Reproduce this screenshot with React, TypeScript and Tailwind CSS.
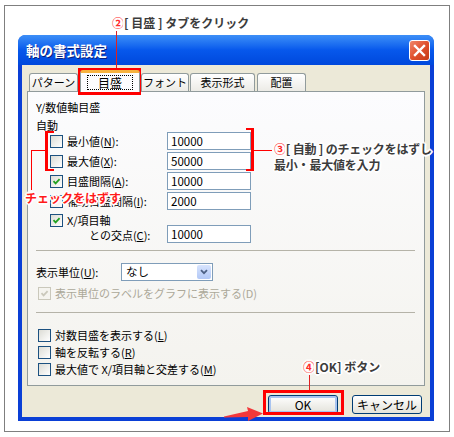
import clsx from "clsx";

function Check({ checked, disabled }: { checked?: boolean; disabled?: boolean }) {
  return (
    <span
      className={clsx(
        "flex h-[13px] w-[13px] shrink-0 items-center justify-center border",
        disabled
          ? "border-[#cac8bb] bg-[#f5f4ef]"
          : "border-[#1c5180] bg-gradient-to-br from-[#dcdcd5] to-white"
      )}
    >
      {checked && (
        <svg width="9" height="9" viewBox="0 0 9 9">
          <path
            d="M1.5 4.2 L3.6 6.4 L7.6 2.2"
            fill="none"
            stroke={disabled ? "#cac8bb" : "#21a121"}
            strokeWidth="1.8"
          />
        </svg>
      )}
    </span>
  );
}

function Field({ value }: { value: string }) {
  return (
    <div className="h-[18px] w-[84px] border border-[#7f9db9] bg-white pl-[3px] text-[11.5px] leading-[16px]">
      {value}
    </div>
  );
}

function Tab({ label, w, selected, ml }: { label: string; w: string; selected?: boolean; ml: string }) {
  return (
    <div
      className={clsx(
        "flex items-center justify-center whitespace-nowrap rounded-t-[3px] border border-b-0 border-[#919b9c] text-[11px]",
        w,
        ml,
        selected
          ? "relative z-10 mb-[-1px] h-[22px] border-t-[3px] border-t-[#f7b340] bg-[#fcfcfe] text-[12px]"
          : "h-[18px] bg-gradient-to-b from-white to-[#ecebe6]"
      )}
    >
      {selected ? (
        <span className="flex h-[15px] w-[46px] items-center justify-center border border-dotted border-black">{label}</span>
      ) : (
        label
      )}
    </div>
  );
}

const halo =
  "[text-shadow:-1px_-1px_0_#fff,1px_-1px_0_#fff,-1px_1px_0_#fff,1px_1px_0_#fff,0_-2px_0_#fff,0_2px_0_#fff,-2px_0_0_#fff,2px_0_0_#fff,0_0_3px_#fff]";

export default function App() {
  return (
    <div className="relative h-[437px] w-[454px] overflow-hidden bg-white pl-[4px] pt-[5px] font-['Noto_Sans_CJK_JP',sans-serif] text-black">
      <div className="h-[427px] w-[446px] border border-[#7f7f7f]">
        {/* dialog window */}
        <div className="ml-[13px] mt-[29px] flex h-[386px] w-[416px] flex-col rounded-t-[8px] bg-[#0a3fd6]">
          <div className="flex h-[30px] items-center justify-between rounded-t-[7px] bg-gradient-to-b from-[#3d8ff7] via-[#0758ec] to-[#0048dc] pl-[8px] pr-[4px]">
            <span className="text-[13.5px] font-bold text-white [text-shadow:1px_1px_0_#0a1e7c]">軸の書式設定</span>
            <div className="flex h-[21px] w-[21px] items-center justify-center rounded-[3px] border border-white bg-gradient-to-br from-[#f0866a] via-[#e0502c] to-[#c63a14]">
              <svg width="13" height="13" viewBox="0 0 13 13">
                <path d="M2 2 L11 11 M11 2 L2 11" stroke="#fff" strokeWidth="2.4" strokeLinecap="square" />
              </svg>
            </div>
          </div>
          <div className="mx-[4px] mb-[4px] flex flex-1 flex-col bg-[#ece9d8] px-[5px] pt-[5px]">
            {/* tabs */}
            <div className="flex h-[21px] items-end">
              <Tab label="パターン" w="w-[49px]" ml="ml-[2px]" />
              <Tab label="目盛" w="w-[60px]" ml="ml-[2px]" selected />
              <Tab label="フォント" w="w-[48px]" ml="ml-[1px]" />
              <Tab label="表示形式" w="w-[65px]" ml="ml-[1px]" />
              <Tab label="配置" w="w-[49px]" ml="ml-[2px]" />
            </div>
            {/* tab page */}
            <div className="flex h-[295px] flex-col border border-[#919b9c] bg-gradient-to-b from-[#fcfcfe] to-[#f4f3ee] pl-[8px] text-[11px]">
              <div className="mt-[8px] h-[14px] leading-[14px]">Y/数値軸目盛</div>
              <div className="mt-[5px] h-[13px] leading-[13px]">自動</div>
              <div className="flex flex-col gap-[2px]">
                <div className="flex h-[18px] items-center">
                  <div className="flex w-[131px] items-center pl-[14px]">
                    <Check />
                    <span className="ml-[4px]">最小値(<span className="underline">N</span>):</span>
                  </div>
                  <Field value="10000" />
                </div>
                <div className="flex h-[18px] items-center">
                  <div className="flex w-[131px] items-center pl-[14px]">
                    <Check />
                    <span className="ml-[4px]">最大値(<span className="underline">X</span>):</span>
                  </div>
                  <Field value="50000" />
                </div>
                <div className="flex h-[18px] items-center">
                  <div className="flex w-[131px] items-center pl-[14px]">
                    <Check checked />
                    <span className="ml-[4px]">目盛間隔(<span className="underline">A</span>):</span>
                  </div>
                  <Field value="10000" />
                </div>
                <div className="flex h-[18px] items-center">
                  <div className="flex w-[131px] items-center pl-[14px]">
                    <Check checked />
                    <span className="ml-[4px]">補助目盛間隔(<span className="underline">I</span>):</span>
                  </div>
                  <Field value="2000" />
                </div>
              </div>
              <div className="mt-[3px] flex h-[30px] items-end">
                <div className="flex w-[131px] flex-col">
                  <div className="flex h-[15px] items-center pl-[14px]">
                    <Check checked />
                    <span className="ml-[4px]">X/項目軸</span>
                  </div>
                  <div className="flex h-[15px] items-center pl-[53px]">
                    との交点(<span className="underline">C</span>):
                  </div>
                </div>
                <Field value="10000" />
              </div>
              <div className="mr-[9px] mt-[7px] h-[2px] border-t border-[#b5b3a8]" />
              <div className="mt-[11px] flex h-[18px] items-center">
                <span className="w-[85px]">表示単位(<span className="underline">U</span>):</span>
                <div className="flex h-[18px] w-[92px] items-center justify-between border border-[#7f9db9] bg-white pl-[4px] pr-[1px]">
                  <span className="text-[11.5px]">なし</span>
                  <div className="flex h-[14px] w-[14px] items-center justify-center rounded-[2px] bg-gradient-to-b from-[#d8e4fd] to-[#b2c8f6]">
                    <svg width="8" height="6" viewBox="0 0 8 6">
                      <path d="M1 1.2 L4 4.2 L7 1.2" fill="none" stroke="#4d6185" strokeWidth="1.8" />
                    </svg>
                  </div>
                </div>
              </div>
              <div className="mt-[5px] flex h-[14px] items-center pl-[2px] text-[#aca899]">
                <Check checked disabled />
                <span className="ml-[4px]">表示単位のラベルをグラフに表示する(D)</span>
              </div>
              <div className="mr-[9px] mt-[12px] h-[2px] border-t border-[#b5b3a8]" />
              <div className="mt-[13px] flex flex-col pl-[2px]">
                <div className="flex h-[17px] items-center">
                  <Check />
                  <span className="ml-[4px]">対数目盛を表示する(<span className="underline">L</span>)</span>
                </div>
                <div className="flex h-[17px] items-center">
                  <Check />
                  <span className="ml-[4px]">軸を反転する(<span className="underline">R</span>)</span>
                </div>
                <div className="flex h-[17px] items-center">
                  <Check />
                  <span className="ml-[4px]">最大値で X/項目軸と交差する(<span className="underline">M</span>)</span>
                </div>
              </div>
            </div>
            {/* buttons */}
            <div className="mt-[9px] flex justify-end gap-[14px] pr-[3px] text-[12px]">
              <div className="flex h-[19px] w-[70px] items-center justify-center rounded-[3px] border border-[#003c74] bg-gradient-to-b from-white to-[#e3e2da] shadow-[inset_0_0_0_2px_#a9c4f0]">
                OK
              </div>
              <div className="flex h-[19px] w-[70px] items-center justify-center rounded-[3px] border border-[#003c74] bg-gradient-to-b from-white to-[#e3e2da]">
                キャンセル
              </div>
            </div>
          </div>
        </div>
      </div>

      {/* annotation: step 2 */}
      <div className={clsx("absolute left-[112px] top-[15px] whitespace-nowrap text-[12px] font-bold leading-[16px] text-[#3c3c3c]", halo)}>
        <span className="text-[#ff2a2a]">②</span>[ 目盛 ] タブをクリック
      </div>
      <div className="absolute left-[116px] top-[31px] h-[37px] w-px bg-[#e02020]" />
      <div className="absolute left-[78px] top-[68px] h-[27px] w-[63px] border-[3px] border-[#ff0000]" />

      {/* annotation: uncheck */}
      <div className="absolute left-[45px] top-[131px] h-[40px] w-[9px] border-y-2 border-l-[3px] border-[#ff0000]" />
      <div className="absolute left-[31px] top-[150px] h-px w-[14px] bg-[#ff0000]" />
      <div className="absolute left-[31px] top-[150px] h-[40px] w-px bg-[#ff0000]" />
      <div className={clsx("absolute left-[25px] top-[189px] whitespace-nowrap text-[12px] font-bold leading-[18px] text-[#ff1a1a]", halo)}>
        チェックをはずす
      </div>

      {/* annotation: step 3 */}
      <div className="absolute left-[246px] top-[128px] h-[43px] w-[8px] border-y-2 border-r-[3px] border-[#ff0000]" />
      <div className="absolute left-[254px] top-[150px] h-px w-[18px] bg-[#ff0000]" />
      <div className={clsx("absolute left-[274px] top-[141px] flex flex-col gap-[1px] whitespace-nowrap text-[12px] font-bold leading-[15px] tracking-[-0.2px] text-[#3c3c3c]", halo)}>
        <div>
          <span className="text-[#ff2a2a]">③</span>[ 自動 ] のチェックをはずし
        </div>
        <div>最小・最大値を入力</div>
      </div>

      {/* annotation: step 4 */}
      <div className={clsx("absolute left-[303px] top-[359px] whitespace-nowrap text-[12px] font-bold leading-[16px] text-[#3c3c3c]", halo)}>
        <span className="text-[#ff2a2a]">④</span>[OK] ボタン
      </div>
      <div className="absolute left-[309px] top-[375px] h-[15px] w-px bg-[#e02020]" />
      <div className="absolute left-[263px] top-[390px] h-[25px] w-[81px] border-[3px] border-[#ff0000]" />
      <svg className="absolute left-[222px] top-[404px]" width="44" height="20" viewBox="0 0 44 20">
        <polygon points="2,12.5 26,7 25,3 41,9.5 26,17 26,13 2,13.5" fill="#f2383a" />
      </svg>
    </div>
  );
}
